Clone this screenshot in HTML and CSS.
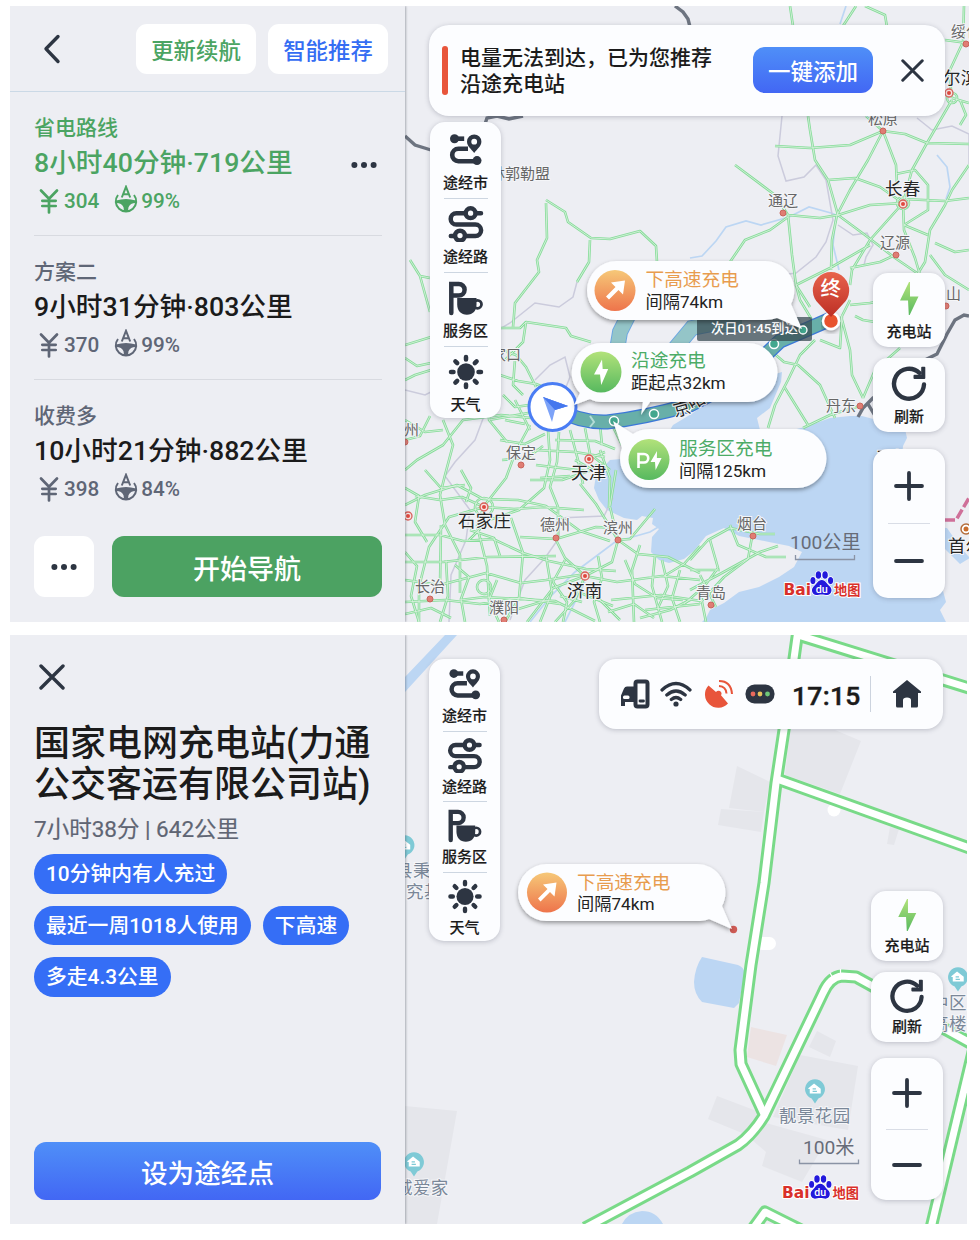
FILE: index.html
```html
<!DOCTYPE html>
<html lang="zh-CN">
<head>
<meta charset="utf-8">
<title>百度地图 新能源导航</title>
<link rel="stylesheet" href="styles.css">
</head>
<body>
<svg class="sprite" width="0" height="0" aria-hidden="true">
  <defs>
    <linearGradient id="gOrange" x1="0" y1="0" x2="0" y2="1"><stop offset="0" stop-color="#f6c878"/><stop offset="1" stop-color="#ee744b"/></linearGradient>
    <linearGradient id="gGreen" x1="0" y1="0" x2="0" y2="1"><stop offset="0" stop-color="#b2e27a"/><stop offset="1" stop-color="#57b95f"/></linearGradient>
    <linearGradient id="gRed" x1="0" y1="0" x2="0" y2="1"><stop offset="0" stop-color="#e8634c"/><stop offset="1" stop-color="#bd2f25"/></linearGradient>
    <filter id="shadow" x="-10%" y="-20%" width="120%" height="150%"><feDropShadow dx="0" dy="2" stdDeviation="2" flood-color="#000" flood-opacity=".38"/></filter>
  </defs>
  <symbol id="i-city" viewBox="0 0 36 36">
    <g fill="none" stroke="#2d3542" stroke-width="4.6"><path d="M6 6.700H16.200"/><path d="M20 16.800H10.400a6.200 6.200 0 0 0 0 12.400H28"/></g>
    <circle cx="6.500" cy="6.700" r="4.500" fill="#2d3542"/><circle cx="29" cy="28.600" r="4.500" fill="#2d3542"/>
    <path fill="#2d3542" fill-rule="evenodd" d="M26.200 2.400a7.200 7.200 0 0 0-7.200 7.200c0 4.600 4.200 7.600 7.200 11.400 3-3.800 7.200-6.800 7.200-11.400a7.200 7.200 0 0 0-7.200-7.200zm0 4.400a2.900 2.900 0 1 1 0 5.800 2.900 2.900 0 0 1 0-5.800z"/>
  </symbol>
  <symbol id="i-road" viewBox="0 0 36 36">
    <g fill="none" stroke="#2d3542" stroke-width="4.500" stroke-linecap="round"><circle cx="22.600" cy="7.200" r="4.900"/><path d="M28 7.200h5M16.500 7.200H8.400a5.700 5.700 0 0 0 0 11.400h19a5.700 5.700 0 0 1 0 11.400H18M2.800 30h4"/><circle cx="12" cy="29.600" r="4.900"/></g>
  </symbol>
  <symbol id="i-service" viewBox="0 0 36 36">
    <path d="M3.300 33V4h7.500a5.800 5.800 0 0 1 0 11.600H3.300" fill="none" stroke="#2d3542" stroke-width="4.500" stroke-linecap="round"/>
    <path d="M9.200 18h19.300v6.500c0 6-3.600 10.300-9.600 10.300S9.200 30.500 9.200 24.500z" fill="#2d3542"/><circle cx="29.500" cy="24.300" r="4" fill="none" stroke="#2d3542" stroke-width="2.800"/>
  </symbol>
  <symbol id="i-sun" viewBox="0 0 36 36">
    <circle cx="18" cy="18" r="8.800" fill="#2d3542"/>
    <path d="M18 3v2.500M18 30.500V33M3 18h2.500M30.500 18H33M7.400 7.400l1.800 1.800M26.800 26.800l1.800 1.800M7.400 28.600l1.800-1.800M26.800 9.200l1.800-1.800" stroke="#2d3542" stroke-width="4.500" stroke-linecap="round"/>
  </symbol>
  <symbol id="i-bolt" viewBox="0 0 36 36"><path d="M18 1L9 19.500h8l.8 14.500h.9L27.500 15.500H19V1z" fill="url(#gGreen)"/></symbol>
  <symbol id="i-refresh" viewBox="0 0 36 36">
    <path d="M33 18.500A15 15 0 1 1 28.500 7" fill="none" stroke="#2d3542" stroke-width="4.400" stroke-linecap="round"/>
    <path d="M34.300 1.500q0-.8-.8-.8H31q-.8 0-.8.8v7.200h-6.700q-1 0-1 1v2.200q0 1 1 1h9.800q1 0 1-1z" fill="#2d3542"/>
  </symbol>
  <symbol id="i-close" viewBox="0 0 26 26"><path d="M2 2l22 22M24 2L2 24" stroke="#2d3542" stroke-width="3.400" stroke-linecap="round"/></symbol>
  <symbol id="i-dots" viewBox="0 0 26 8"><g fill="#2d3542"><circle cx="3.400" cy="4" r="3"/><circle cx="13" cy="4" r="3"/><circle cx="22.600" cy="4" r="3"/></g></symbol>
  <symbol id="i-yen" viewBox="0 0 20 26"><path d="M2 2.500l8 8.300 8-8.300M10 10.800V24.500M3.300 12.800h13.400M3.300 18h13.400" fill="none" stroke="currentColor" stroke-width="2.700" stroke-linecap="round"/></symbol>
  <symbol id="i-wheel" viewBox="0 0 24 28">
    <path d="M4 10A10.200 10.200 0 1 0 20 10" fill="none" stroke="currentColor" stroke-width="2"/>
    <path d="M2 15.500q10-3 20 0v2.200q-6 .3-7.500 4.500l-.6 4h-3.800l-.6-4Q8 18 2 17.700z" fill="currentColor"/>
    <path d="M7.800 12.500L12 1.800l4.200 10.700M9.300 9.300h5.400" fill="none" stroke="currentColor" stroke-width="2"/>
  </symbol>
  <symbol id="i-house" viewBox="0 0 22 26">
    <path d="M11 25.500l-3.500-5.200A10.400 10.400 0 1 1 14.500 20.300z" fill="#7fcad6"/>
    <path d="M4 9.500l6-4.800 7 5.500v4.800H5.500V10.500H4z" fill="#fff"/><path d="M8.500 10.300h3.500M8.500 12.800h4.500" stroke="#7fcad6" stroke-width="1.200"/>
  </symbol>
  <symbol id="i-paw" viewBox="0 0 24 26">
    <g fill="#2319dc" stroke="#fff" stroke-width="1.600" paint-order="stroke"><ellipse cx="8.600" cy="4.600" rx="2.800" ry="3.900"/><ellipse cx="15.400" cy="4.600" rx="2.800" ry="3.900"/><ellipse cx="3" cy="10.300" rx="2.600" ry="3.600"/><ellipse cx="21" cy="10.300" rx="2.600" ry="3.600"/>
    <path d="M12 9.700c4.200 0 5.200 4.300 8.300 6.700 3.200 2.800 1.500 8.700-2.700 8.700-2 0-3.500-.6-5.600-.6s-3.600.6-5.600.6c-4.200 0-5.900-5.900-2.700-8.700C6.800 14 7.800 9.700 12 9.700z"/></g>
    <text x="12" y="22.500" class="paw-du">du</text>
  </symbol>
</svg>

<main class="board">
  <section class="screen screen-plan">
    <aside class="side">
      <header class="side-head">
        <svg class="back" viewBox="0 0 18 30"><path d="M15 2.500L3 14.800 15 27.500" fill="none" stroke="#2d3542" stroke-width="3.400" stroke-linecap="round" stroke-linejoin="round"/></svg>
        <button class="chip chip-green">更新续航</button>
        <button class="chip chip-blue">智能推荐</button>
      </header>
      <div class="routes">
        <article class="route active">
          <div class="route-name">省电路线</div>
          <div class="route-main"><span>8小时40分钟·719公里</span><svg class="dots"><use href="#i-dots"/></svg></div>
          <div class="route-stats"><svg class="yen"><use href="#i-yen"/></svg><span class="fee">304</span><svg class="wheel"><use href="#i-wheel"/></svg><span>99%</span></div>
        </article>
        <article class="route">
          <div class="route-name">方案二</div>
          <div class="route-main"><span>9小时31分钟·803公里</span></div>
          <div class="route-stats"><svg class="yen"><use href="#i-yen"/></svg><span class="fee">370</span><svg class="wheel"><use href="#i-wheel"/></svg><span>99%</span></div>
        </article>
        <article class="route">
          <div class="route-name">收费多</div>
          <div class="route-main"><span>10小时21分钟·882公里</span></div>
          <div class="route-stats"><svg class="yen"><use href="#i-yen"/></svg><span class="fee">398</span><svg class="wheel"><use href="#i-wheel"/></svg><span>84%</span></div>
        </article>
      </div>
      <footer class="side-foot">
        <button class="more"><svg class="dots"><use href="#i-dots"/></svg></button>
        <button class="go">开始导航</button>
      </footer>
    </aside>

    <div class="map">
      <svg class="map-canvas" viewBox="405 6 564 616" width="564" height="616">
        <defs>
          <g id="roads">
            <path d="M546 200l19 12 3 10 23 16 19 1 30-8 16 15 1 16M546 203l1 35-10 22 2 12-24 31-2 24M590 240l-1 22-12 20M410 260l10 16 10 36M420 276l10 2M500 328l20 0 6-6 40 6 5 8 20 6M405 345l26-8M405 380l10-5 16-5M405 358l12 8 14-3"/>
            <path d="M790 6l3 20M856 6l-13 20M865 6l20 9 2 12M964 6l-1 36-14 30 3 26M945 40l22 3M808 116l2 14 5 30 13 20 10 35M775 146l35 2 40-3 33-14M883 131l-15 29-18 30-13 25-5 25-1 30M866 116l17 15 22 3 22 9 42 1M883 131l13 34 1 20M952 100l-25 43-15 27-9 33M735 165l40 30 13 20M788 215l32 3 18-3 32-10 33-2M828 180l27-2 25 9 23 16M788 215l4 40 4 30 14 22M788 217l-18 13-25 10-15 22M838 215l27 20 30 23 25 17M903 203l-33 37-18 30-2 15M896 174l19-4 13 15v25l-24 15M903 203l1 27 11 28 5 17M903 199l42 2 24-3M969 165l-17 25-7 15-15 25-5 32-8 13M935 243l20 9 14-2M850 268l30-6 15-7M796 285l34-17 40-23M904 225l24 10M930 255l15 20 24 15M952 98l17 5M960 100l6 15-6 10"/>
            <path d="M796 285l4 15 12 20M770 350l14 12 14 3 22 20 15 33M768 428l7-23 13-25 12-25 15-15M785 388l23 37M842 316l8-16M841 316l9 34 2 25 11 23M863 398l12-28 25-22M820 340l20 8 2-32M803 428l27-13 33-10M850 305l20-2 15-3M855 316l8 4 12 2"/>
            <path d="M501 350l15 5 10 12 10 20M500 375l18 6 18 3 20 8M515 360l-2 25 10 10M526 322l-3 20-18 18M405 440l15-4 10-20M405 470l12-10 26-15 20-25 38-5 30 3M405 505l20-10 32-10 26 14 35 1 28 6 34 25 30 10M443 420l10 25-8 30-5 20 5 30 15 30 0 38M492 350l-3 40 0 30 18 22M489 420l45-8M530 425l-14 26-10 27-22 28-7 20 10 40 3 50M530 480l32 0 30-10M548 430l2 30-6 28-25 22-30 10-20 20M559 432l-2 30-7 25 8 20 0 30M570 430l8 30 5 24M484 507l30 2 30-2 40 3M484 507l-22-10-22 3-25-4M484 507l-35 10-20 30-10 40 0 35M405 535l35 0 23 6M441 525l-1 60M463 541l30-2 30 14 26 8 37 8 30 2M405 562l38 0 45-5 68-1M405 602l40-2 35 4 40-6 40 6M405 580l35 5 46-12 35 10 25-3 40-6"/>
            <path d="M555 538l10 20 20 18M520 537l36 2 40-12 21 1M618 540l-6 22-27 14-32 12-26 34M618 540l20 14 30 3 32 16M585 576l-10 24-20 22M585 576l32 6 45-6 38 4M640 545l-8 25 2 52M655 509l-25 30-12 1M610 507l8 33M616 470l-6 36M600 450l10 28-1 30M580 484l16 20 22 36M655 556l-3 30 10 36M700 546l-16 18-20 12M611 600l50-5 40 6M680 570l-8 28 8 24M505 622l14-24 4-45-12-35M540 622l12-30-6-36M440 622l8-26-2-36M460 600l25-3 70 4 40 20M590 590l30 30M560 596l22 6M645 610l55-6"/>
            <path d="M535 450l40 2 30 5M536 465l50 6M540 478l30-2M555 440l40 1 20 8M585 428l5 26 20 16M600 425l2 20M612 425l10 20M500 440l25 4 20-10M505 420l20 4M515 400l15 30M502 460l25-2 16-12M503 395l12 12 14-2M575 460l25 14M590 458l15-6M595 465l10 3"/>
            <path d="M690 560l18-20 22-12 30 6 15 0M730 525l8 20 28 12 20 0M752 537l-4 22-24 18-24 26M706 622l-6-30 18-24-8-28M690 590l30-16 40-22 18-6M690 600l-20 10-30 8M700 575l16 32M720 570l-30 0"/>
            <path d="M405 420l20 12 18-2M405 488l14 8-4 26 12 20M425 470l16 18 24-3M461 470l10 18-5 14M405 552l12 14-6 30 8 26M455 565l14 12-8 22 4 23M405 614l26-6 20 10M470 530l24 8 6 18M497 580l-8 20 10 22M515 610l26-8M565 560l-12 22 14 20-4 20M598 556l4 22-8 24 6 20M625 560l10 24 22 14 26 2M608 612l26-8 20 14M662 560l6 26-10 22M573 590l40 16M700 590l-16 14"/>
            <circle cx="484" cy="587" r="7"/><circle cx="952" cy="98" r="5"/><circle cx="484" cy="507" r="9"/><circle cx="903" cy="203" r="6"/>
          </g>
        </defs>
        <rect x="405" y="6" width="564" height="616" fill="#edeef3"/>
        <path fill="#bcd6f3" d="M782 372l-1 10-11 26-13 10 3 12 28 1 17-4 25-9 20-2 12 0 15 4 12 9 16 0 2 9-4 8-3 40-15 20-10 8 12 12 60 2 14 20 9 10-10 6-18-18-3 30 7 26-6 8 7 14H700l6-6 4-8 14-7 15-11 20-5 20-10 15-10 8-15-13-6-20-4-30-6-15-8-18 8-12 15-10 8-15 4-10-3-8-8 1-15 7-8-7-5 1-6-11-2-5 4-13-2-17-8-8-10-5-12 2-13 14-15 22-2 29-13 12-20 20-12 32-24z"/>
        <path d="M690 258l12-2 14-15 10-14 20-6 15 4 28-8 20-10 22 6 10 4M846 6l-6 18M937 155l10 12 3 20-4 12M836 215l-3 30 6 25M530 622l20-25 25-25 40-30 35-10 20-12M565 622l20-40M405 470" fill="none" stroke="#bcd6f3" stroke-width="1.700"/>
        <path d="M577 282l-4 15-14 10-24-4-25 20-10 6M782 116l-4 40 8 25 18-4 12-12 10 15 7 40-7 22-10 15-20 16-15 2M838 225l15 10 14-2 6 12-7 12-2 8M917 118l15 12 20-4 17 8 0 30M405 390l20 5 20-10M490 400l-15 40-20 22-10 14 25 34-4 30-15 35-2 47M510 620l15-40 20-22 14-20 0-20 45-2 9-18M535 380l15-15 15-8 5 20-8 20-25 22M770 310l30 10" fill="none" stroke="#cbcbdc" stroke-width="1.500"/>
        <g fill="none" stroke="#6d7480" stroke-width="3.400"><path d="M675 6l8 6 5 7 2 8M485 124l2-6 10-2 12 3 14-3M405 136l10 9 16 5"/><path d="M858 417l5-9 10-10 20-10 32-28 12-6 10-20 8-14 9-5 5 1M868 404l6 10 8 4"/></g>
        <path d="M945 520h11l13-22" fill="none" stroke="#cf7099" stroke-width="3.500" stroke-dasharray="10 3"/>
        <use href="#roads" class="road-case"/><use href="#roads" class="road-core"/>

        <path d="M617 350l3-18 8-16M672 352l20-24 20-4 30 0" class="alt-edge"/><path d="M617 350l3-18 8-16M672 352l20-24 20-4 30 0" class="alt-fill"/>
        <path d="M553 408q28 15 54 14 36-4 83-17l50-26 40-38 51-22" class="way-edge"/><path d="M553 408q28 15 54 14 36-4 83-17l50-26 40-38 51-22" class="way-fill"/>
        <path d="M590 416l4 6-4 5" fill="none" stroke="#b4dcd6" stroke-width="2"/>
        <g fill="#43a78e" stroke="#fff" stroke-width="1.500"><circle cx="654" cy="414" r="4.500"/><circle cx="687" cy="407" r="4.500"/><circle cx="774" cy="344" r="4.500"/><circle cx="614" cy="421" r="4.500"/></g>

        <g class="town"><text x="490" y="179">林郭勒盟</text><text x="868" y="124">松原</text><text x="768" y="206">通辽</text><text x="880" y="248">辽源</text><text x="951" y="37">绥化</text><text x="946" y="299">山</text><text x="826" y="411">丹东</text><text x="506" y="458">保定</text><text x="540" y="530">德州</text><text x="603" y="533">滨州</text><text x="737" y="529">烟台</text><text x="696" y="598">青岛</text><text x="415" y="592">长治</text><text x="489" y="613">濮阳</text><text x="404" y="435">州</text><text x="476" y="360">张家口</text></g>
        <g class="city"><text x="885" y="195">长春</text><text x="571" y="479">天津</text><text x="458" y="527">石家庄</text><text x="567" y="597">济南</text><text x="943" y="84">尔滨</text><text x="948" y="552">首尔</text><text x="876" y="464">平壤</text><text x="675" y="417" transform="rotate(-15 675 417)">京</text><text x="692" y="410" transform="rotate(-30 692 410)">哈</text></g>
        <g fill="#e07d74" stroke="#c9645c" stroke-width="1"><circle cx="883" cy="131" r="3"/><circle cx="783" cy="213" r="3"/><circle cx="896" cy="255" r="3"/><circle cx="966" cy="44" r="3"/><circle cx="946" cy="306" r="3"/><circle cx="860" cy="406" r="3"/><circle cx="521" cy="465" r="3"/><circle cx="556" cy="538" r="3"/><circle cx="618" cy="540" r="3"/><circle cx="753" cy="536" r="3"/><circle cx="711" cy="605" r="3"/><circle cx="430" cy="599" r="3"/><circle cx="504" cy="620" r="3"/><circle cx="405" cy="442" r="3"/></g>
        <g class="capital-ring"><circle cx="903" cy="204" r="4"/><circle cx="589" cy="459" r="4"/><circle cx="484" cy="507" r="4"/><circle cx="585" cy="576" r="4"/><circle cx="949" cy="93" r="4"/><circle cx="408" cy="516" r="4"/></g>
        <g class="capital"><circle cx="903" cy="204" r="2"/><circle cx="589" cy="459" r="2"/><circle cx="484" cy="507" r="2"/><circle cx="585" cy="576" r="2"/><circle cx="949" cy="93" r="2"/><circle cx="408" cy="516" r="2"/></g>
        <circle cx="966" cy="529" r="5" fill="#fff" stroke="#b46d3c" stroke-width="1.500"/><circle cx="966" cy="529" r="2.500" fill="#c96c2c"/>

        <rect x="697" y="317" width="115" height="24" rx="2" fill="#33474d" fill-opacity=".72"/>
        <text x="711" y="333" class="eta">次日01:45到达</text>
        <circle cx="803" cy="330" r="4" fill="#43a78e" stroke="#fff" stroke-width="1.300"/>

        <circle cx="831" cy="321" r="8" fill="#e8532f" stroke="#fff" stroke-width="2.500" filter="url(#shadow)"/>
        <path d="M831 317l-12-13a18.200 18.200 0 1 1 24 0z" fill="url(#gRed)"/><text x="820.500" y="296" class="end">终</text>

        <circle cx="552.500" cy="407" r="23.500" fill="#fff" stroke="#4a7df4" stroke-width="3"/>
        <path d="M543 397l25 9-14 4z" fill="#3c6ae8"/><path d="M543 397l9 25 3-12 13-4z" fill="#7da3f8"/><path d="M543 397l25 9-13 4z" fill="#4577ee"/>

        <path d="M616.500 261H765a29.500 29.500 0 0 1 26 43L802 329 777 318q-5 2-12 2H616.500a29.500 29.500 0 0 1 0-59z" fill="#fcfdff" filter="url(#shadow)"/>
        <circle cx="615" cy="290.500" r="20.500" fill="url(#gOrange)"/><path d="M606 296.500l9.500-9.500-4.500-4.500 14-2-2 14-4.500-4.500-9.500 9.500z" fill="#fff"/>
        <text x="645.500" y="286" class="tip tip-orange">下高速充电</text><text x="645.500" y="308" class="tip-sub">间隔74km</text>

        <path d="M602 343H748a29.500 29.500 0 0 1 0 59H650l-9 13 2-13H602q-7 0-12-3L574 405l6-12a29.500 29.500 0 0 1 22-50z" fill="#fcfdff" filter="url(#shadow)"/>
        <circle cx="601" cy="372" r="20.500" fill="url(#gGreen)"/><path d="M602 359.500l-8 15h6l1.200 10.500 7-16h-5.500z" fill="#fff"/>
        <text x="631" y="367" class="tip tip-green">沿途充电</text><text x="631" y="389" class="tip-sub">距起点32km</text>

        <path d="M650 429H797a29.500 29.500 0 0 1 0 59H650a29.500 29.500 0 0 1-28-40L613 421 633 434q7-5 17-5z" fill="#fcfdff" filter="url(#shadow)"/>
        <circle cx="649" cy="459.500" r="20.500" fill="url(#gGreen)"/><path d="M638.500 468V454h5.500a4.200 4.200 0 0 1 0 8.500h-5.500" fill="none" stroke="#fff" stroke-width="2.600"/><path d="M657 451l-6.500 11h4.500l.6 8 6-12h-4.700z" fill="#fff"/>
        <text x="679" y="455" class="tip tip-green">服务区充电</text><text x="679" y="477" class="tip-sub">间隔125km</text>

        <text x="790" y="548.500" class="scale">100公里</text><path d="M795.500 555v4.500h59V555" class="scale-line"/>
        <text x="783.500" y="595" class="logo-bai">Bai</text><use href="#i-paw" x="810" y="570.500" width="23.500" height="25.500"/><text x="834" y="595" class="logo-map">地图</text>
      </svg>

      <div class="notice"><i class="notice-bar"></i><p>电量无法到达，已为您推荐<br>沿途充电站</p><button class="add">一键添加</button><svg class="x"><use href="#i-close"/></svg></div>
      <nav class="tools">
        <a class="tool"><svg><use href="#i-city"/></svg><span>途经市</span></a>
        <a class="tool"><svg><use href="#i-road"/></svg><span>途经路</span></a>
        <a class="tool"><svg><use href="#i-service"/></svg><span>服务区</span></a>
        <a class="tool"><svg><use href="#i-sun"/></svg><span>天气</span></a>
      </nav>
      <div class="controls">
        <button class="ctl"><svg><use href="#i-bolt"/></svg><span>充电站</span></button>
        <button class="ctl"><svg><use href="#i-refresh"/></svg><span>刷新</span></button>
        <div class="zoom"><svg viewBox="0 0 30 30"><path d="M2 15h26M15 2v26"/></svg><i></i><svg viewBox="0 0 30 30"><path d="M2 15h26"/></svg></div>
      </div>
    </div>
  </section>

  <section class="screen screen-station">
    <aside class="side">
      <svg class="close"><use href="#i-close"/></svg>
      <h1>国家电网充电站(力通<br>公交客运有限公司站)</h1>
      <p class="meta">7小时38分 | 642公里</p>
      <div class="tags"><span>10分钟内有人充过</span><span>最近一周1018人使用</span><span>下高速</span><span>多走4.3公里</span></div>
      <button class="via">设为途经点</button>
    </aside>
    <div class="map">
      <svg class="map-canvas" viewBox="405 635 562 589" width="562" height="589">
        <defs><g id="streets"><path d="M798 630L784 730 776 783 764 883 751 965 740 1050 741 1064 764 1114"/><path d="M777 779L972 849"/><path d="M798 635L972 689"/><path d="M585 1228L690 1172 738 1145Q752 1135 764 1116L823 993Q830 977 842 976L856 977 876 988 943 1028 972 1044"/><path d="M974 1048L931 1228"/><path d="M752 1230L765 1212 805 1232"/></g></defs>
        <rect x="405" y="635" width="562" height="589" fill="#edeef3"/>
        <g fill="#e5e6eb"><path d="M785 775l5-45h45l26 11-21 53zM737 766l33 16-6 30-35-4zM721 809l43 3-3 20-43-7zM817 1031l19 10-6 16-21-10zM800 1055l58 11-10 64-75-13zM717 1096l45 17-20 20-34-14zM766 1123l61 17-25 42-40-16 4-14-14-12zM405 1106l52 5-20 113h-32zM890 827l9 2-5 16-7-1z"/></g>
        <path d="M751 1027l36 8-11 31-29-9z" fill="#ece3e3"/>
        <path d="M702 957l36 8q8 3 6 12l-5 26-5 5-32-6q-8-8-8-20 1-15 8-25zM405 677l40-42h12l-52 57zM622 1224q6-12 20-13 14 0 21 13z" fill="#bcd6f3"/>
        <g fill="#fff"><circle cx="834" cy="810" r="6.500"/><rect x="756" y="937" width="20" height="13" rx="6.500"/></g>
        <use href="#streets" class="street-case"/><use href="#streets" class="street-core"/>
        <path d="M830 973l3 5M840.500 969l0 5" stroke="#fff" stroke-width="1.200"/>
        <use href="#i-house" x="804.500" y="1079" width="21" height="25"/><use href="#i-house" x="947.500" y="967" width="21" height="25"/><use href="#i-house" x="394" y="835" width="21" height="25"/><use href="#i-house" x="403.500" y="1152" width="21" height="25"/>
        <g class="place"><text x="779" y="1122">靓景花园</text><text x="395" y="1194">城爱家</text><text x="395" y="877">县秉</text><text x="406" y="898">究基</text><text x="931" y="1009">中区</text><text x="931" y="1030">高楼</text></g>
        <circle cx="733.500" cy="929.500" r="3.700" fill="#cf5b55"/>
        <path d="M546.500 864H696a28.500 28.500 0 0 1 26 42L732 929 709 919q-5 2-13 2H546.500a28.500 28.500 0 0 1 0-57z" fill="#fcfdff" filter="url(#shadow)"/>
        <circle cx="547" cy="892.500" r="20" fill="url(#gOrange)"/><path d="M538 898.500l9.500-9.500-4.500-4.500 13.500-2-2 14-4.500-4.500-9.500 9.500z" fill="#fff"/>
        <text x="577" y="888.500" class="tip tip-orange">下高速充电</text><text x="577" y="909.500" class="tip-sub">间隔74km</text>
        <text x="803" y="1154" class="scale">100米</text><path d="M799.500 1159.500v4h59v-4" class="scale-line"/>
        <text x="782" y="1198" class="logo-bai">Bai</text><use href="#i-paw" x="808.500" y="1174.500" width="23.500" height="25"/><text x="832.500" y="1198" class="logo-map">地图</text>
      </svg>
      <nav class="tools">
        <a class="tool"><svg><use href="#i-city"/></svg><span>途经市</span></a>
        <a class="tool"><svg><use href="#i-road"/></svg><span>途经路</span></a>
        <a class="tool"><svg><use href="#i-service"/></svg><span>服务区</span></a>
        <a class="tool"><svg><use href="#i-sun"/></svg><span>天气</span></a>
      </nav>
      <div class="status">
        <svg class="s-car" viewBox="0 0 30 30"><path d="M1 27V16.500l3-7Q4.800 7.500 7 7.500h7V23H5v4z" fill="#2d3542"/><rect x="3" y="16.500" width="6.500" height="3.500" rx="1.500" fill="#fff"/><rect x="15.500" y="2.500" width="12" height="25" rx="2" fill="#fcfdff" stroke="#2d3542" stroke-width="4"/><path d="M20 22h3.500" stroke="#2d3542" stroke-width="2.800" stroke-linecap="round"/></svg>
        <svg class="s-wifi" viewBox="0 0 32 26"><g fill="none" stroke="#2d3542" stroke-width="3.200" stroke-linecap="round"><path d="M2 9q14-13 28 0M6.800 14q9.200-8 18.400 0M11.300 18.500q4.700-4 9.400 0"/></g><circle cx="16" cy="23" r="2.600" fill="#2d3542"/></svg>
        <svg class="s-sat" viewBox="0 0 30 30"><path d="M5.500 6.500L13 13q1.500-2 4-1 2.500 1.800 1 4.300L25 24.500A13.200 13.200 0 1 1 5.500 6.500z" fill="#e8553b"/><path d="M16 7q7 .5 7.500 7.500M16 2q12 0 13 13" fill="none" stroke="#e8553b" stroke-width="2"/></svg>
        <svg class="s-light" viewBox="0 0 30 20"><rect x=".5" y=".5" width="29" height="19" rx="9" fill="#2d3542"/><circle cx="8" cy="10" r="2.400" fill="#e8695c"/><circle cx="15" cy="10" r="2.400" fill="#e8c35c"/><circle cx="22.500" cy="10" r="2.400" fill="#6fc878"/></svg>
        <time>17:15</time><i class="s-line"></i>
        <svg class="s-home" viewBox="0 0 30 30"><path d="M15 1L1 12.500V14h3v13q0 1.500 1.500 1.500H11V21q0-2.500 4-2.500t4 2.500v7.500h5.500Q26 28.500 26 27V14h3v-1.500z" fill="#2d3542"/></svg>
      </div>
      <div class="controls">
        <button class="ctl"><svg><use href="#i-bolt"/></svg><span>充电站</span></button>
        <button class="ctl"><svg><use href="#i-refresh"/></svg><span>刷新</span></button>
        <div class="zoom"><svg viewBox="0 0 30 30"><path d="M2 15h26M15 2v26"/></svg><i></i><svg viewBox="0 0 30 30"><path d="M2 15h26"/></svg></div>
      </div>
    </div>
  </section>
</main>
</body>
</html>
```
FILE: styles.css
```css
* { box-sizing: border-box; margin: 0; padding: 0; }
body { background: #fff; font-family: Roboto, "Noto Sans CJK SC", sans-serif; font-weight: 500; color: #1b1b1b; }
button { border: 0; background: none; font: inherit; color: inherit; }
svg { display: block; flex: none; }
.sprite { position: absolute; }
.board { width: 980px; height: 1240px; padding: 6px 0 0 10px; display: flex; flex-direction: column; gap: 13px; overflow: hidden; }
.screen { display: flex; background: #edeef3; overflow: hidden; }
.screen-plan { width: 959px; height: 616px; }
.screen-station { width: 957px; height: 589px; }
.side { width: 395px; flex: none; background: #edeef3; position: relative; z-index: 2; display: flex; flex-direction: column; box-shadow: 1px 0 2px rgba(60, 65, 80, .38); }
.map { position: relative; flex: 1; overflow: hidden; }

/* route planning sidebar */
.side-head { height: 86px; display: flex; align-items: center; gap: 12px; padding: 0 17px 0 33px; border-bottom: 1px solid #cbd9e6; }
.back { width: 18px; height: 30px; margin-right: auto; }
.chip { width: 120px; height: 50px; border-radius: 11px; background: #fff; font-size: 22.400px; }
.chip-green { color: #4ba462; }
.chip-blue { color: #356df3; }
.route { height: 144px; margin: 0 23px 0 24px; padding-top: 21px; border-bottom: 1px solid #d8dae0; color: #5f6676; }
.route:last-child { border: 0; }
.route-name { font-size: 21px; line-height: 30px; }
.route-main { display: flex; justify-content: space-between; align-items: center; padding-top: 2px; margin-bottom: -2px; font-size: 26.700px; line-height: 36px; color: #1b1b1b; white-space: nowrap; }
.dots { width: 26px; height: 8px; }
.route-main .dots { margin: 3px 5px 0 0; }
.route-stats { display: flex; align-items: center; height: 30px; margin-top: 7px; padding-left: 5px; font-size: 20.700px; }
.yen { width: 20px; height: 26px; margin: -1px 5px 0 0; }
.wheel { width: 24px; height: 28px; margin: -4px 3px 0 15px; }
.active, .active .route-main { color: #4ba462; }
.side-foot { display: flex; gap: 18px; padding: 12px 23px 0 24px; }
.more { width: 60px; height: 61px; border-radius: 11px; background: #fff; display: flex; align-items: center; justify-content: center; }
.go { flex: 1; height: 61px; border-radius: 12px; background: #4ca262; color: #fff; font-size: 27px; padding-top: 2px; }

/* station sidebar */
.screen-station .side { padding: 29px 24px 24px; }
.close { width: 26px; height: 26px; margin-left: 5px; }
h1 { margin-top: 34px; font-size: 36px; line-height: 41px; font-weight: 500; white-space: nowrap; }
.meta { margin-top: 8px; font-size: 22.500px; line-height: 30px; font-weight: 400; color: #5f6573; -webkit-text-stroke: .2px currentColor; }
.tags { margin-top: 10px; display: flex; flex-wrap: wrap; gap: 12px; }
.tags span { height: 39.500px; line-height: 41px; padding: 0 12px; border-radius: 20px; background: #356ef6; color: #fff; font-size: 20.800px; white-space: nowrap; }
.via { margin-top: auto; height: 58px; border-radius: 12px; background: linear-gradient(#4f8ff8, #4267f4); color: #fff; font-size: 26.600px; padding-top: 1px; }

/* floating cards on the map */
.notice, .tools, .ctl, .zoom, .status { background: #fcfdff; box-shadow: 0 1px 5px rgba(60, 66, 85, .28); }
.notice { position: absolute; left: 24px; top: 19px; width: 516px; height: 91px; border-radius: 20px; display: flex; align-items: center; padding: 0 21px 0 13px; }
.notice-bar { width: 6px; height: 49px; border-radius: 3px; background: #e8553b; margin-right: 12px; }
.notice p { font-size: 21px; line-height: 25.500px; padding-top: 2px; white-space: nowrap; flex: 1; }
.add { width: 120px; height: 46px; border-radius: 12px; background: linear-gradient(#4f8ff8, #4267f4); color: #fff; font-size: 22.500px; margin: -1px 28px 0 0; }
.x { width: 23px; height: 23px; }
.tools { position: absolute; left: 25px; top: 116px; width: 71px; height: 296px; border-radius: 15px; display: flex; flex-direction: column; align-items: center; padding-top: 3px; }
.tool { width: 44px; height: 74px; flex: none; display: flex; flex-direction: column; align-items: center; padding-top: 7px; border-bottom: 1px solid #cdd6e1; }
.tool:last-child { border: 0; }
.tool svg { width: 36px; height: 36px; }
.tool span, .ctl span { font-size: 15px; line-height: 20px; margin-top: 5px; white-space: nowrap; -webkit-text-stroke: .15px currentColor; }
.controls { position: absolute; left: 468px; top: 267px; width: 72px; display: flex; flex-direction: column; }
.ctl { height: 74px; border-radius: 15px; margin-bottom: 11px; padding-top: 8px; display: flex; flex-direction: column; align-items: center; }
.ctl svg { width: 36px; height: 36px; }
.zoom { height: 149px; margin-top: 6px; border-radius: 15px; display: flex; flex-direction: column; align-items: center; justify-content: space-evenly; }
.zoom svg { width: 30px; height: 30px; fill: none; stroke: #2d3542; stroke-width: 3.800; stroke-linecap: round; }
.zoom i { width: 42px; height: 1px; background: #d9dde6; }

.screen-station .tools { left: 24px; top: 24px; height: 282px; padding-top: 2px; }
.screen-station .tool { height: 70.700px; padding-top: 6px; }
.screen-station .tool svg { height: 35px; }
.screen-station .tool span { margin-top: 4px; }
.screen-station .controls { left: 466px; top: 256px; }
.screen-station .ctl { height: 70px; padding-top: 7px; }
.screen-station .ctl svg { height: 35px; }
.screen-station .ctl span { margin-top: 3px; }
.screen-station .zoom { height: 142px; margin-top: 5px; }
.status { position: absolute; left: 194px; top: 24px; width: 344px; height: 70px; border-radius: 17px; display: flex; align-items: center; padding-left: 21px; }
.s-car { width: 30px; height: 30px; }
.s-wifi { width: 32px; height: 26px; margin-left: 10px; }
.s-sat { width: 30px; height: 30px; margin-left: 11px; }
.s-light { width: 30px; height: 20px; margin-left: 12px; }
time { width: 70px; margin: 2px 0 0 17px; font-size: 26.500px; letter-spacing: .3px; white-space: nowrap; -webkit-text-stroke: .4px currentColor; }
.s-line { width: 1px; height: 36px; background: #ccd3de; margin: 0 21px 0 8px; }
.s-home { width: 30px; height: 30px; }

/* map drawing */
.road-case { fill: none; stroke: #86dd99; stroke-width: 2.600; stroke-linejoin: round; }
.road-core { fill: none; stroke: #e2f1e6; stroke-width: .8; stroke-linejoin: round; }
.street-case { fill: none; stroke: #79da88; stroke-width: 13; stroke-linejoin: round; }
.street-core { fill: none; stroke: #fff; stroke-width: 7; stroke-linejoin: round; }
.way-edge { fill: none; stroke: #3c78d8; stroke-width: 15; }
.way-fill { fill: none; stroke: #68afa9; stroke-width: 12.500; }
.alt-edge { fill: none; stroke: #6ba6e2; stroke-width: 16; }
.alt-fill { fill: none; stroke: #94c5c8; stroke-width: 14; }
.town { font-size: 15px; font-weight: 400; fill: #666; stroke: #f4f5f8; stroke-width: 2; paint-order: stroke; }
.city { font-size: 17.500px; letter-spacing: .3px; font-weight: 400; fill: #262626; stroke: #f4f5f8; stroke-width: 2; paint-order: stroke; }
.capital-ring circle { fill: #f6e3e1; stroke: #d8605a; stroke-width: 1.300; }
.capital circle { fill: #e0493f; }
.eta { font-size: 13.300px; fill: #fff; }
.end { font-size: 20.500px; fill: #fff; }
.tip { font-size: 18.700px; font-weight: 400; }
.tip-orange { fill: #e89c4e; }
.tip-green { fill: #4cac67; }
.tip-sub { font-size: 17.200px; font-weight: 400; fill: #222; }
.scale { font-size: 19.200px; font-weight: 400; fill: #676c78; }
.scale-line { fill: none; stroke: #8a93a5; stroke-width: 1.300; }
.place { font-size: 17.500px; letter-spacing: .4px; font-weight: 400; fill: #7a8798; stroke: #f5f6f9; stroke-width: 2; paint-order: stroke; }
.logo-bai { font-family: "DejaVu Sans", sans-serif; font-size: 15.500px; font-weight: 700; fill: #d9302a; stroke: #fff; stroke-width: 2; paint-order: stroke; }
.logo-map { font-size: 13.200px; font-weight: 700; fill: #d9302a; stroke: #fff; stroke-width: 2; paint-order: stroke; }
.paw-du { font-family: Roboto, sans-serif; font-size: 11px; font-weight: 500; fill: #fff; text-anchor: middle; }
```
